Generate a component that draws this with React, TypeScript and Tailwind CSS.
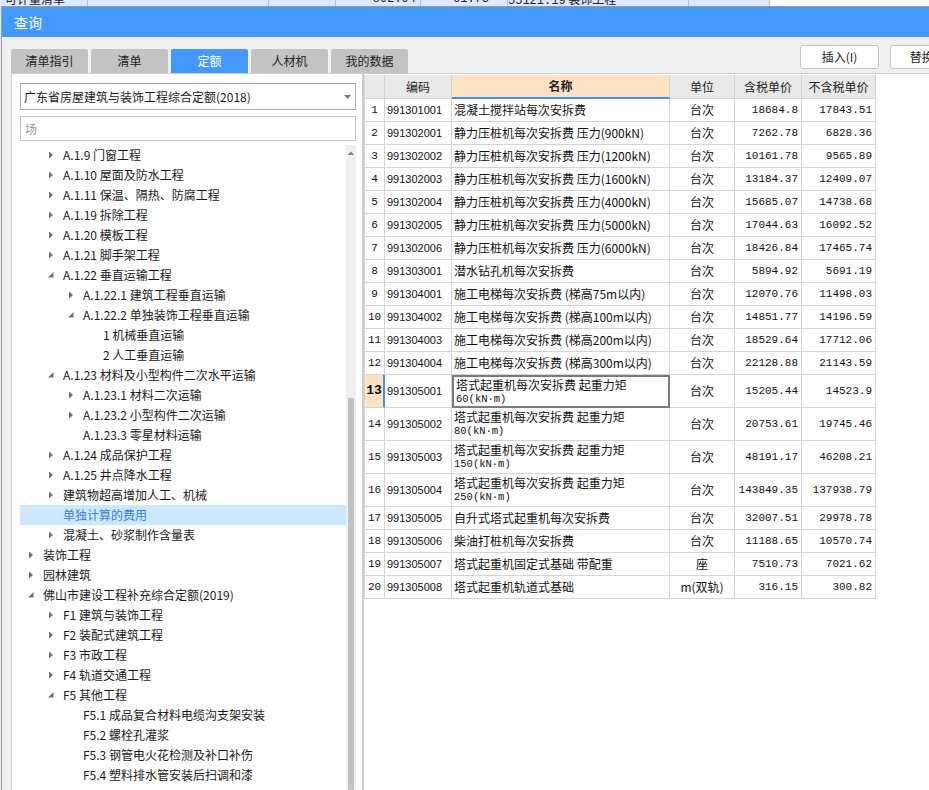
type Node = { lv: number; arrow?: 'c' | 'o'; text: string; sel?: boolean }

const tree: Node[] = [
  { lv: 1, arrow: 'c', text: 'A.1.9 门窗工程' },
  { lv: 1, arrow: 'c', text: 'A.1.10 屋面及防水工程' },
  { lv: 1, arrow: 'c', text: 'A.1.11 保温、隔热、防腐工程' },
  { lv: 1, arrow: 'c', text: 'A.1.19 拆除工程' },
  { lv: 1, arrow: 'c', text: 'A.1.20 模板工程' },
  { lv: 1, arrow: 'c', text: 'A.1.21 脚手架工程' },
  { lv: 1, arrow: 'o', text: 'A.1.22 垂直运输工程' },
  { lv: 2, arrow: 'c', text: 'A.1.22.1 建筑工程垂直运输' },
  { lv: 2, arrow: 'o', text: 'A.1.22.2 单独装饰工程垂直运输' },
  { lv: 3, text: '1 机械垂直运输' },
  { lv: 3, text: '2 人工垂直运输' },
  { lv: 1, arrow: 'o', text: 'A.1.23 材料及小型构件二次水平运输' },
  { lv: 2, arrow: 'c', text: 'A.1.23.1 材料二次运输' },
  { lv: 2, arrow: 'c', text: 'A.1.23.2 小型构件二次运输' },
  { lv: 2, text: 'A.1.23.3 零星材料运输' },
  { lv: 1, arrow: 'c', text: 'A.1.24 成品保护工程' },
  { lv: 1, arrow: 'c', text: 'A.1.25 井点降水工程' },
  { lv: 1, arrow: 'c', text: '建筑物超高增加人工、机械' },
  { lv: 1, text: '单独计算的费用', sel: true },
  { lv: 1, arrow: 'c', text: '混凝土、砂浆制作含量表' },
  { lv: 0, arrow: 'c', text: '装饰工程' },
  { lv: 0, arrow: 'c', text: '园林建筑' },
  { lv: 0, arrow: 'o', text: '佛山市建设工程补充综合定额(2019)' },
  { lv: 1, arrow: 'c', text: 'F1 建筑与装饰工程' },
  { lv: 1, arrow: 'c', text: 'F2 装配式建筑工程' },
  { lv: 1, arrow: 'c', text: 'F3 市政工程' },
  { lv: 1, arrow: 'c', text: 'F4 轨道交通工程' },
  { lv: 1, arrow: 'o', text: 'F5 其他工程' },
  { lv: 2, text: 'F5.1 成品复合材料电缆沟支架安装' },
  { lv: 2, text: 'F5.2 螺栓孔灌浆' },
  { lv: 2, text: 'F5.3 钢管电火花检测及补口补伤' },
  { lv: 2, text: 'F5.4 塑料排水管安装后扫调和漆' },
]

const rows: string[][] = [
  ['991301001', '混凝土搅拌站每次安拆费', '', '台次', '18684.8', '17843.51'],
  ['991302001', '静力压桩机每次安拆费 压力(900kN)', '', '台次', '7262.78', '6828.36'],
  ['991302002', '静力压桩机每次安拆费 压力(1200kN)', '', '台次', '10161.78', '9565.89'],
  ['991302003', '静力压桩机每次安拆费 压力(1600kN)', '', '台次', '13184.37', '12409.07'],
  ['991302004', '静力压桩机每次安拆费 压力(4000kN)', '', '台次', '15685.07', '14738.68'],
  ['991302005', '静力压桩机每次安拆费 压力(5000kN)', '', '台次', '17044.63', '16092.52'],
  ['991302006', '静力压桩机每次安拆费 压力(6000kN)', '', '台次', '18426.84', '17465.74'],
  ['991303001', '潜水钻孔机每次安拆费', '', '台次', '5894.92', '5691.19'],
  ['991304001', '施工电梯每次安拆费 (梯高75m以内)', '', '台次', '12070.76', '11498.03'],
  ['991304002', '施工电梯每次安拆费 (梯高100m以内)', '', '台次', '14851.77', '14196.59'],
  ['991304003', '施工电梯每次安拆费 (梯高200m以内)', '', '台次', '18529.64', '17712.06'],
  ['991304004', '施工电梯每次安拆费 (梯高300m以内)', '', '台次', '22128.88', '21143.59'],
  ['991305001', '塔式起重机每次安拆费 起重力矩', '60(kN·m)', '台次', '15205.44', '14523.9'],
  ['991305002', '塔式起重机每次安拆费 起重力矩', '80(kN·m)', '台次', '20753.61', '19745.46'],
  ['991305003', '塔式起重机每次安拆费 起重力矩', '150(kN·m)', '台次', '48191.17', '46208.21'],
  ['991305004', '塔式起重机每次安拆费 起重力矩', '250(kN·m)', '台次', '143849.35', '137938.79'],
  ['991305005', '自升式塔式起重机每次安拆费', '', '台次', '32007.51', '29978.78'],
  ['991305006', '柴油打桩机每次安拆费', '', '台次', '11188.65', '10570.74'],
  ['991305007', '塔式起重机固定式基础 带配重', '', '座', '7510.73', '7021.62'],
  ['991305008', '塔式起重机轨道式基础', '', 'm(双轨)', '316.15', '300.82'],
]

const tabs = ['清单指引', '清单', '定额', '人材机', '我的数据']
const cjk = "font-['Noto_Sans_CJK_SC','Noto_Sans',sans-serif]"
const mono = "font-['Liberation_Mono','Noto_Sans_CJK_SC',monospace]"
const indent = ['pl-[5px]', 'pl-[25px]', 'pl-[45px]', 'pl-[65px]']

function Arrow({ kind }: { kind?: 'c' | 'o' }) {
  if (kind === 'c')
    return (
      <svg width="18" height="20" viewBox="0 0 18 20" className="shrink-0">
        <path d="M4 6.5 L8 10 L4 13.5 Z" fill="#707070" />
      </svg>
    )
  if (kind === 'o')
    return (
      <svg width="18" height="20" viewBox="0 0 18 20" className="shrink-0">
        <path d="M8.5 7 L8.5 12.5 L3 12.5 Z" fill="#707070" />
      </svg>
    )
  return <span className="w-[18px] shrink-0" />
}

function Tree() {
  return (
    <div className="flex flex-1 min-h-0 mt-[4px]">
      <div className="flex-1 min-w-0">
        {tree.map((n, i) => (
          <div key={i} className={`flex items-center h-[20px] ${indent[n.lv]} ${n.sel ? 'bg-[#cce8ff] text-[#3c7fd9]' : 'text-[#1a1a1a]'}`}>
            <Arrow kind={n.arrow} />
            <span className="text-[12px] leading-[20px] whitespace-nowrap">{n.text}</span>
          </div>
        ))}
      </div>
      <div className="w-[10px] flex flex-col items-center bg-[#f0f0f0]">
        <svg width="10" height="10" viewBox="0 0 10 10" className="mt-[3px]">
          <path d="M1.5 7 L5 3.5 L8.5 7 Z" fill="#888" />
        </svg>
        <div className="mt-[240px] w-[6px] flex-1 bg-[#c2c2c2] rounded-[1px]" />
      </div>
    </div>
  )
}

function Table() {
  const cols = 'grid grid-cols-[21px_67px_218px_65px_67px_74px] w-[512px]'
  const cell = 'border-r border-b border-[#d4d4d4] flex items-center'
  return (
    <div className="flex flex-col">
      <div className={`${cols} h-[24px] bg-[#e9e9e9] text-[12px] text-[#222]`}>
        <div className={`${cell} border-l`} />
        <div className={`${cell} justify-center`}>编码</div>
        <div className="border-r border-[#d4d4d4] border-b-2 border-b-[#4a90e2] bg-[#fde3c4] flex items-center justify-center font-bold">名称</div>
        <div className={`${cell} justify-center`}>单位</div>
        <div className={`${cell} justify-center`}>含税单价</div>
        <div className={`${cell} justify-center`}>不含税单价</div>
      </div>
      {rows.map((r, i) => {
        const tall = r[2] !== ''
        const cur = i === 12
        return (
          <div key={i} className={`${cols} ${tall ? 'h-[33px]' : 'h-[23px]'} text-[#111]`}>
            <div className={`${cell} border-l justify-center ${mono} text-[11px] ${cur ? 'bg-[#fde3c4] font-bold text-[13px] border-r-2 border-r-[#4a90e2]' : ''}`}>{i + 1}</div>
            <div className={`${cell} pl-[2px] font-['Liberation_Sans',sans-serif] text-[11px]`}>{r[0]}</div>
            <div className={`${cur ? 'border-2 border-[#7a7a7a]' : 'border-r border-b border-[#d4d4d4]'} flex flex-col justify-center pl-[2px]`}>
              <div className="text-[12px] leading-[14px] whitespace-nowrap">{r[1]}</div>
              {tall && <div className={`${mono} text-[10.5px] leading-[14px] whitespace-nowrap`}>{r[2]}</div>}
            </div>
            <div className={`${cell} justify-center text-[12px]`}>{r[3]}</div>
            <div className={`${cell} justify-end pr-[3px] ${mono} text-[11px]`}>{r[4]}</div>
            <div className={`${cell} justify-end pr-[3px] ${mono} text-[11px]`}>{r[5]}</div>
          </div>
        )
      })}
    </div>
  )
}

export default function App() {
  return (
    <div className={`w-[929px] h-[790px] overflow-hidden flex flex-col bg-white ${cjk}`}>
      {/* sheet behind the dialog */}
      <div className="h-[6px] overflow-hidden flex bg-[#dde9fb] text-[12px] leading-[12px] text-[#222]">
        <div className="w-[88px] border-r border-[#b8c4d6] pl-[5px] -mt-[7px]">可计量清单</div>
        <div className="w-[181px] border-r border-[#b8c4d6]" />
        <div className="w-[67px] border-r border-[#b8c4d6]" />
        <div className={`w-[85px] border-r border-[#b8c4d6] text-right pr-[4px] -mt-[7px] ${mono}`}>892.94</div>
        <div className={`w-[87px] border-r border-[#b8c4d6] text-right pr-[18px] -mt-[7px] ${mono}`}>61.73</div>
        <div className="w-[181px] border-r border-[#b8c4d6] -mt-[7px] whitespace-nowrap"><span className={mono}>55121.19</span> 装饰工程</div>
        <div className="w-[81px] border-r border-[#b8c4d6]" />
        <div className="flex-1 bg-white" />
      </div>
      <div className="flex flex-1 min-h-0">
        <div className="w-[2px] bg-[#dde9fb] border-r border-[#a0a0a0]" />
        <div className="flex-1 flex flex-col bg-[#f0f0f0] border-t border-[#9a9a9a]">
          <div className="h-[30px] bg-[#4499ff] flex items-center pl-[12px] text-white text-[14px]">查询</div>
          <div className="h-[36px] flex items-end pl-[9px]">
            <div className="flex gap-[3px]">
              {tabs.map(t => (
                <div key={t} className={`w-[77px] h-[24px] flex items-center justify-center text-[12px] rounded-t-[2px] ${t === '定额' ? 'bg-[#4499ff] text-white' : 'bg-[#c3c3c3] text-[#222]'}`}>{t}</div>
              ))}
            </div>
            <div className="flex-1" />
            <div className="flex gap-[11px] self-start mt-[8px] -mr-[40px]">
              <div className="w-[79px] h-[24px] bg-white border border-[#c6c6c6] rounded-[3px] flex items-center justify-center text-[12px] text-[#222]">插入(I)</div>
              <div className="w-[79px] h-[24px] bg-white border border-[#c6c6c6] rounded-[3px] flex items-center justify-center text-[12px] text-[#222]">替换(R)</div>
            </div>
          </div>
          <div className="flex flex-1 min-h-0">
            <div className="w-[351px] ml-[9px] bg-white border-l border-t border-[#cfcfcf] flex flex-col pl-[8px] pr-[6px] pt-[9px]">
              <div className="h-[27px] border border-[#ababab] flex items-center pl-[3px] pr-[4px] text-[12px] text-[#1a1a1a]">
                <span className="flex-1">广东省房屋建筑与装饰工程综合定额(2018)</span>
                <svg width="7" height="4" viewBox="0 0 7 4"><path d="M0 0 L7 0 L3.5 4 Z" fill="#777" /></svg>
              </div>
              <div className="h-[25px] mt-[6px] border border-[#c4c4c4] flex items-center pl-[4px] text-[12px] text-[#9a9a9a]">场</div>
              <Tree />
            </div>
            <div className="flex-1 bg-white border-l-2 border-t border-[#cfcfcf] pt-[1px]">
              <Table />
            </div>
          </div>
        </div>
      </div>
    </div>
  )
}
